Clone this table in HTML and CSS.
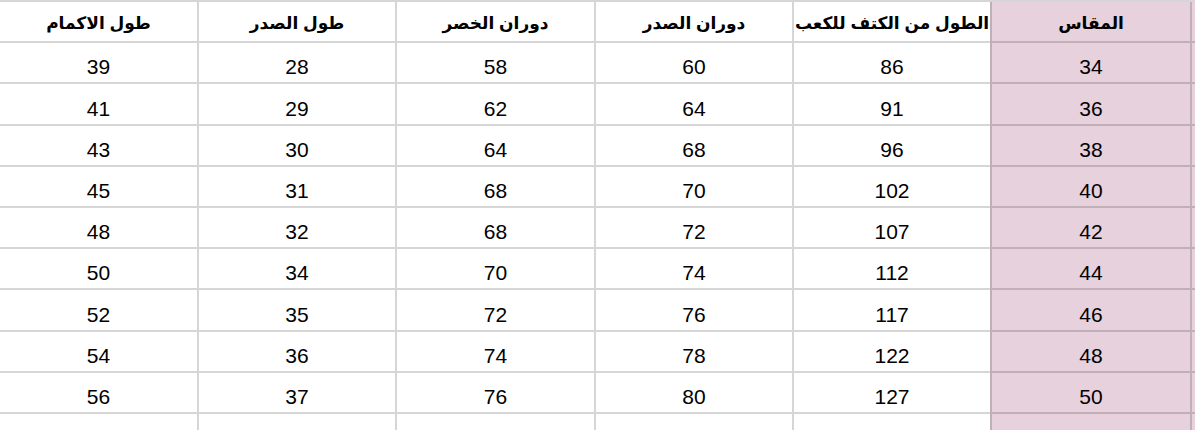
FILE: index.html
```html
<!DOCTYPE html>
<html lang="ar" dir="rtl">
<head>
<meta charset="utf-8">
<title>جدول المقاسات</title>
<link rel="stylesheet" href="styles.css">
</head>
<body>
<div class="sheet">
  <div class="cell sliver"></div>
  <div class="cell head key">المقاس</div>
  <div class="cell head">الطول من الكتف للكعب</div>
  <div class="cell head">دوران الصدر</div>
  <div class="cell head">دوران الخصر</div>
  <div class="cell head">طول الصدر</div>
  <div class="cell head first">طول الاكمام</div>

  <div class="cell sliver"></div><div class="cell key">34</div><div class="cell">86</div><div class="cell">60</div><div class="cell">58</div><div class="cell">28</div><div class="cell first">39</div>
  <div class="cell sliver"></div><div class="cell key">36</div><div class="cell">91</div><div class="cell">64</div><div class="cell">62</div><div class="cell">29</div><div class="cell first">41</div>
  <div class="cell sliver"></div><div class="cell key">38</div><div class="cell">96</div><div class="cell">68</div><div class="cell">64</div><div class="cell">30</div><div class="cell first">43</div>
  <div class="cell sliver"></div><div class="cell key">40</div><div class="cell">102</div><div class="cell">70</div><div class="cell">68</div><div class="cell">31</div><div class="cell first">45</div>
  <div class="cell sliver"></div><div class="cell key">42</div><div class="cell">107</div><div class="cell">72</div><div class="cell">68</div><div class="cell">32</div><div class="cell first">48</div>
  <div class="cell sliver"></div><div class="cell key">44</div><div class="cell">112</div><div class="cell">74</div><div class="cell">70</div><div class="cell">34</div><div class="cell first">50</div>
  <div class="cell sliver"></div><div class="cell key">46</div><div class="cell">117</div><div class="cell">76</div><div class="cell">72</div><div class="cell">35</div><div class="cell first">52</div>
  <div class="cell sliver"></div><div class="cell key">48</div><div class="cell">122</div><div class="cell">78</div><div class="cell">74</div><div class="cell">36</div><div class="cell first">54</div>
  <div class="cell sliver"></div><div class="cell key">50</div><div class="cell">127</div><div class="cell">80</div><div class="cell">76</div><div class="cell">37</div><div class="cell first">56</div>

  <div class="cell sliver empty"></div><div class="cell key empty"></div><div class="cell empty"></div><div class="cell empty"></div><div class="cell empty"></div><div class="cell empty"></div><div class="cell first empty"></div>
</div>
</body>
</html>
```
FILE: styles.css
```css
html, body {
  margin: 0;
  padding: 0;
  background: #ffffff;
  overflow: hidden;
}

.sheet {
  display: grid;
  grid-template-columns: 5px 200px 198px 198px 199px 198px 197px;
  grid-template-rows: repeat(10, 41.2px) 30px;
  border-top: 2px solid rgba(0, 0, 0, 0.16);
  width: 1195px;
  font-family: "Liberation Sans", Arial, "DejaVu Sans", sans-serif;
  color: #000000;
}

.cell {
  box-sizing: border-box;
  display: flex;
  align-items: flex-end;
  justify-content: center;
  border-left: 2px solid rgba(0, 0, 0, 0.16);
  border-bottom: 2px solid rgba(0, 0, 0, 0.16);
  font-size: 21px;
  line-height: 24px;
  padding-bottom: 3px;
  background: #ffffff;
  white-space: nowrap;
  min-width: 0;
}

.cell.first {
  border-left: none;
}

.cell.head {
  font-weight: bold;
  font-size: 17px;
  line-height: 22px;
  padding-bottom: 6px;
}

.cell.key,
.cell.sliver {
  background: #e6d1dc;
}

.cell.empty {
  border-bottom: none;
}
```
